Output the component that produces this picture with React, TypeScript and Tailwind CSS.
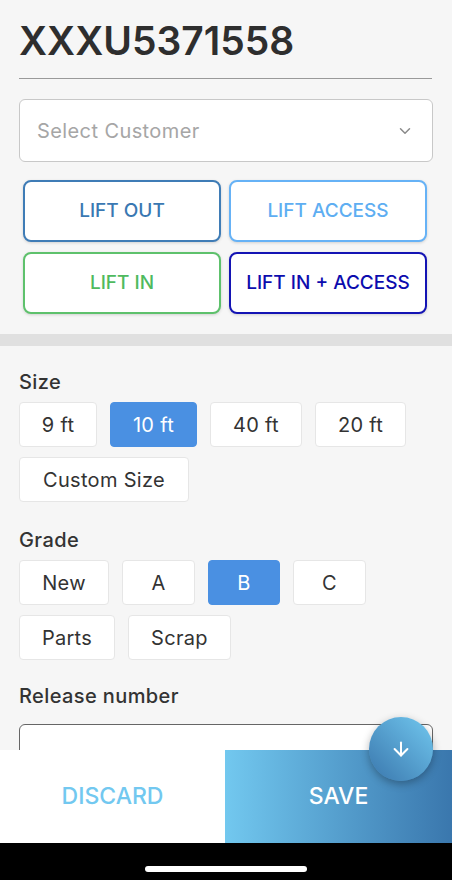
import { ChevronDown, ArrowDown } from 'lucide-react'

const liftButtons = [
  { label: 'LIFT OUT', cls: 'border-[#3f7cb6] text-[#3a78b2]' },
  { label: 'LIFT ACCESS', cls: 'border-[#66b2f6] text-[#5eaef2]' },
  { label: 'LIFT IN', cls: 'border-[#5ec16c] text-[#4fba5e]' },
  { label: 'LIFT IN + ACCESS', cls: 'border-[#1414b4] text-[#0c0cae]' },
]

const sizes = [
  { label: '9 ft', w: 'w-[78px]' },
  { label: '10 ft', w: 'w-[87px]' },
  { label: '40 ft', w: 'w-[92px]' },
  { label: '20 ft', w: 'w-[91px]' },
  { label: 'Custom Size', w: 'w-[170px]' },
]

const grades = [
  { label: 'New', w: 'w-[90px]' },
  { label: 'A', w: 'w-[73px]' },
  { label: 'B', w: 'w-[72px]' },
  { label: 'C', w: 'w-[73px]' },
  { label: 'Parts', w: 'w-[96px]' },
  { label: 'Scrap', w: 'w-[103px]' },
]

function Chip({ label, w, active }: { label: string; w: string; active?: boolean }) {
  return (
    <button
      className={
        active
          ? `h-[45px] ${w} rounded-[4px] border border-[#4a90e2] bg-[#4a90e2] text-[20px] tracking-[0.3px] text-white`
          : `h-[45px] ${w} rounded-[4px] border border-[#e6e6e6] bg-white text-[20px] tracking-[0.3px] text-[#333]`
      }
    >
      {label}
    </button>
  )
}

export default function App() {
  return (
    <div
      className="relative flex h-[880px] w-[452px] flex-col overflow-hidden bg-[#f6f6f6]"
      style={{ fontFamily: 'Inter, "Noto Sans", sans-serif' }}
    >
      <div className="flex-1 overflow-hidden">
        <div className="px-[19px] pt-[18px]">
          <h1 className="text-[39px] leading-[46px] font-semibold text-[#2e2e2e]">XXXU5371558</h1>
          <div className="mt-[14px] h-px w-[413px] bg-[#9a9a9a]" />
          <div className="mt-[20px] flex h-[63px] items-center justify-between rounded-[6px] border border-[#c8c8c8] bg-white pr-[18px] pl-[17px]">
            <span className="text-[20px] tracking-[0.4px] text-[#a6a6a6]">Select Customer</span>
            <ChevronDown size={18} strokeWidth={2} className="text-[#8a8a8a]" />
          </div>
        </div>
        <div className="grid grid-cols-2 gap-x-[8px] gap-y-[10px] pt-[18px] pr-[25px] pb-[20px] pl-[23px]">
          {liftButtons.map((b) => (
            <button
              key={b.label}
              className={`h-[62px] rounded-[8px] border-2 bg-white text-[19px] font-medium shadow-[0_1px_3px_rgba(0,0,0,0.15)] ${b.cls}`}
            >
              {b.label}
            </button>
          ))}
        </div>
        <div className="h-[12px] bg-[#e0e0e0]" />
        <div className="px-[19px] pt-[24px]">
          <div className="text-[20px] leading-[24px] font-medium tracking-[0.4px] text-[#333]">Size</div>
          <div className="mt-[8px] flex flex-wrap gap-x-[13px] gap-y-[10px]">
            {sizes.map((s) => (
              <Chip key={s.label} label={s.label} w={s.w} active={s.label === '10 ft'} />
            ))}
          </div>
          <div className="mt-[26px] text-[20px] leading-[24px] font-medium tracking-[0.4px] text-[#333]">Grade</div>
          <div className="mt-[8px] flex flex-wrap gap-x-[13px] gap-y-[10px]">
            {grades.map((g) => (
              <Chip key={g.label} label={g.label} w={g.w} active={g.label === 'B'} />
            ))}
          </div>
          <div className="mt-[24px] text-[20px] leading-[24px] font-medium tracking-[0.4px] text-[#333]">
            Release number
          </div>
          <div className="mt-[16px] h-[62px] rounded-[6px] border border-[#666] bg-white" />
        </div>
      </div>
      <div className="flex h-[93px] shrink-0">
        <button className="w-[225px] bg-white text-[23px] font-medium text-[#72c8f0]">DISCARD</button>
        <button className="flex-1 bg-gradient-to-r from-[#72c8ef] to-[#3a77ad] text-[23px] font-medium text-white">
          SAVE
        </button>
      </div>
      <div className="flex h-[37px] shrink-0 items-start justify-center bg-black pt-[23px]">
        <div className="h-[6px] w-[162px] rounded-full bg-white" />
      </div>
      <div className="absolute top-[717px] left-[369px] flex h-[64px] w-[64px] items-center justify-center rounded-full bg-gradient-to-tr from-[#3a77ad] to-[#72c8ef] shadow-[0_3px_8px_rgba(0,0,0,0.3)]">
        <ArrowDown size={22} strokeWidth={2.2} className="text-white" />
      </div>
    </div>
  )
}
